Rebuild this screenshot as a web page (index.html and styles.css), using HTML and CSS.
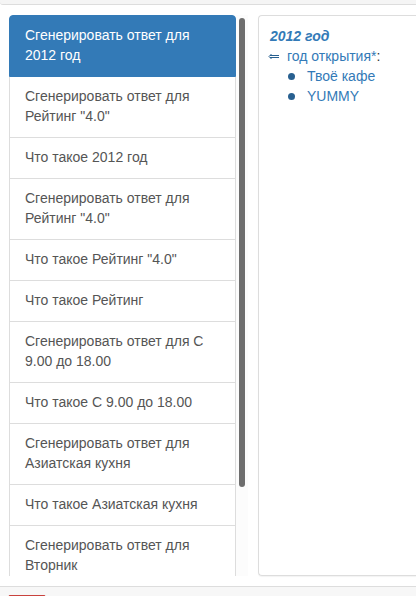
FILE: index.html
```html
<!DOCTYPE html>
<html lang="ru">
<head>
<meta charset="utf-8">
<title>2012 год</title>
<link rel="stylesheet" href="styles.css">
</head>
<body>
<header class="topbar"></header>
<main class="workspace">
  <nav class="scroller">
    <div class="list-group">
      <a class="item active" href="#">Сгенерировать ответ для 2012 год</a>
      <a class="item" href="#">Сгенерировать ответ для Рейтинг "4.0"</a>
      <a class="item" href="#">Что такое 2012 год</a>
      <a class="item" href="#">Сгенерировать ответ для Рейтинг "4.0"</a>
      <a class="item" href="#">Что такое Рейтинг "4.0"</a>
      <a class="item" href="#">Что такое Рейтинг</a>
      <a class="item" href="#">Сгенерировать ответ для С 9.00 до 18.00</a>
      <a class="item" href="#">Что такое С 9.00 до 18.00</a>
      <a class="item" href="#">Сгенерировать ответ для Азиатская кухня</a>
      <a class="item" href="#">Что такое Азиатская кухня</a>
      <a class="item" href="#">Сгенерировать ответ для Вторник</a>
    </div>
    <div class="track"><div class="thumb"></div></div>
  </nav>
  <section class="panel">
    <a class="title" href="#">2012 год</a>
    <div class="relation">
      <svg class="arrow" width="11" height="7" viewBox="0 0 11 7" aria-hidden="true"><path d="M11 2.5H2M11 4.5H2M3.5 1L1 3.5L3.5 6"/></svg>
      <span><a href="#">год открытия*</a>:</span>
    </div>
    <ul class="values">
      <li><a href="#">Твоё кафе</a></li>
      <li><a href="#">YUMMY</a></li>
    </ul>
  </section>
</main>
<footer class="bottombar"><button class="danger" type="button"></button></footer>
</body>
</html>
```
FILE: styles.css
```css
* {
  box-sizing: border-box;
}

body {
  display: flex;
  flex-direction: column;
  height: 100vh;
  margin: 0;
  overflow: hidden;
  background: #fff;
  color: #333;
  font: 14px/20px "Liberation Sans", Arial, sans-serif;
}

a {
  color: #337ab7;
  text-decoration: none;
}

.topbar {
  flex: 0 0 5px;
  background: #f5f5f5;
  border-bottom: 1px solid #ddd;
  border-bottom-left-radius: 3px;
}

.workspace {
  display: flex;
  flex: 1;
  gap: 10px;
  min-height: 0;
  padding: 10px 0 10px 9px;
}

.scroller {
  display: flex;
  flex: 0 0 239px;
  overflow: hidden;
}

.list-group {
  flex: 1;
}

.item {
  display: block;
  padding: 9px 15px 11px;
  border: 1px solid #ddd;
  border-top-width: 0;
  color: #555;
}

.item.active {
  border-color: #337ab7;
  border-top-width: 1px;
  border-radius: 4px 4px 0 0;
  background: #337ab7;
  color: #fff;
}

.track {
  flex: 0 0 12px;
  padding: 3px;
  background: #fcfcfc;
}

.thumb {
  height: 84.5%;
  border-radius: 3px;
  background: #6e6e6e;
}

.panel {
  flex: 1;
  padding: 10px 0 10px 9px;
  border: 1px solid #ddd;
  border-right: 0;
  border-radius: 4px 0 0 4px;
  box-shadow: 0 1px 1px rgba(0, 0, 0, 0.05);
}

.title {
  display: block;
  padding-left: 2px;
  font-style: italic;
  font-weight: bold;
}

.relation {
  display: flex;
  align-items: center;
  gap: 8px;
}

.arrow {
  fill: none;
  stroke: #286090;
}

.values {
  margin: 0;
  padding: 0;
  list-style: none;
}

.values li {
  display: flex;
  align-items: center;
  gap: 12px;
  padding-left: 20px;
}

.values li::before {
  width: 7px;
  height: 7px;
  border-radius: 50%;
  background: #286090;
  content: "";
}

.bottombar {
  flex: 0 0 10px;
  padding: 8px 8px 0;
  overflow: hidden;
  border-top: 1px solid #ddd;
  background: #f7f7f7;
}

.danger {
  display: block;
  width: 38px;
  height: 34px;
  padding: 0;
  border: 1px solid #c9423d;
  border-radius: 2px;
  background: #d9534f;
}
```
